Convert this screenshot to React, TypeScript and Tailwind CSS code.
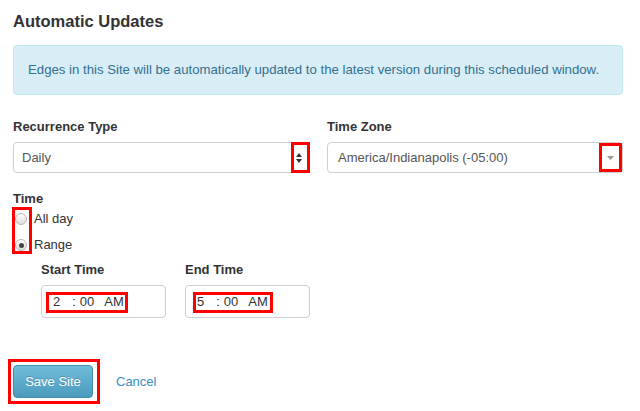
import React from 'react'

function Mark({ className }: { className: string }) {
  // red annotation frame drawn over a control
  return <span className={`pointer-events-none absolute border-[3px] border-[#ff0000] ${className}`} />
}

function Radio({ checked, label }: { checked?: boolean; label: string }) {
  return (
    <label className="flex h-[26px] items-center">
      <span className="ml-[2px] flex h-[12px] w-[12px] items-center justify-center rounded-full border border-[#b5b5b5] bg-gradient-to-b from-[#ffffff] to-[#dcdcdc]">
        {checked && <span className="h-[5px] w-[5px] rounded-full bg-[#444]" />}
      </span>
      <span className="ml-[7px] text-[13px] text-[#333]">{label}</span>
    </label>
  )
}

function TimeBox({ hour, mark }: { hour: string; mark: string }) {
  return (
    <div className="relative flex h-[33px] w-[125px] items-center rounded-[4px] border border-[#cfcfcf] bg-white pl-[11px] text-[13px] text-[#333]">
      <span>{hour}</span>
      <span className="ml-[12px]">:</span>
      <span className="ml-[4px]">00</span>
      <span className="ml-[10px]">AM</span>
      <Mark className={mark} />
    </div>
  )
}

export default function App() {
  return (
    <div className="h-[411px] w-[640px] overflow-hidden bg-white px-[13px] font-['Liberation_Sans',Arial,sans-serif]">
      <h2 className="pt-[12px] text-[16.5px] font-bold leading-[18px] text-[#333]">Automatic Updates</h2>

      <div className="mt-[15px] flex h-[50px] w-[610px] items-center rounded-[4px] border border-[#bce8f1] bg-[#d9edf7] pl-[14px] text-[13.2px] text-[#31708f]">
        Edges in this Site will be automatically updated to the latest version during this scheduled window.
      </div>

      <div className="mt-[24px] grid w-[610px] grid-cols-[297px_296px] gap-x-[17px]">
        <div>
          <div className="text-[13px] font-bold leading-[16px] text-[#333]">Recurrence Type</div>
          <div className="relative mt-[7px] flex h-[31px] items-center rounded-[4px] border border-[#cfcfcf] bg-white pl-[8px] text-[13px] text-[#555]">
            Daily
            <svg className="absolute right-[6px] top-[9px]" width="8" height="12" viewBox="0 0 8 12">
              <path d="M4 1 L7 5 L1 5 Z" fill="#333" />
              <path d="M4 11 L7 7 L1 7 Z" fill="#333" />
            </svg>
            <Mark className="left-[277px] top-[-1px] h-[31px] w-[19px]" />
          </div>
        </div>
        <div>
          <div className="text-[13px] font-bold leading-[16px] text-[#333]">Time Zone</div>
          <div className="relative mt-[7px] flex h-[31px] items-center rounded-[4px] border border-[#cfcfcf] bg-white pl-[10px] text-[13px] text-[#555]">
            America/Indianapolis (-05:00)
            <svg className="absolute right-[8px] top-[13px]" width="7" height="4" viewBox="0 0 7 4">
              <path d="M0 0 L7 0 L3.5 4 Z" fill="#999" />
            </svg>
            <Mark className="left-[271px] top-[0px] h-[29px] w-[23px]" />
          </div>
        </div>
      </div>

      <div className="mt-[18px] text-[13px] font-bold leading-[15px] text-[#333]">Time</div>
      <div className="relative w-[120px]">
        <Radio label="All day" />
        <Radio checked label="Range" />
        <Mark className="left-[-1px] top-[1px] h-[47px] w-[20px]" />
      </div>

      <div className="ml-[28px] mt-[4px] flex gap-[19px]">
        <div>
          <div className="text-[13px] font-bold leading-[16px] text-[#333]">Start Time</div>
          <div className="mt-[7px]">
            <TimeBox hour="2" mark="left-[4px] top-[6px] h-[21px] w-[82px]" />
          </div>
        </div>
        <div>
          <div className="text-[13px] font-bold leading-[16px] text-[#333]">End Time</div>
          <div className="mt-[7px]">
            <TimeBox hour="5" mark="left-[7px] top-[6px] h-[21px] w-[80px]" />
          </div>
        </div>
      </div>

      <div className="mt-[47px] flex items-center">
        <div className="relative">
          <button className="h-[33px] w-[80px] rounded-[4px] border border-[#4590b0] bg-gradient-to-b from-[#70bcda] to-[#4a9bbd] text-[13px] text-white [text-shadow:0_-1px_0_rgba(0,0,0,0.2)]">
            Save Site
          </button>
          <Mark className="left-[-5px] top-[-6px] h-[45px] w-[92px]" />
        </div>
        <a className="ml-[23px] text-[13px] text-[#3a8fbf]">Cancel</a>
      </div>
    </div>
  )
}
